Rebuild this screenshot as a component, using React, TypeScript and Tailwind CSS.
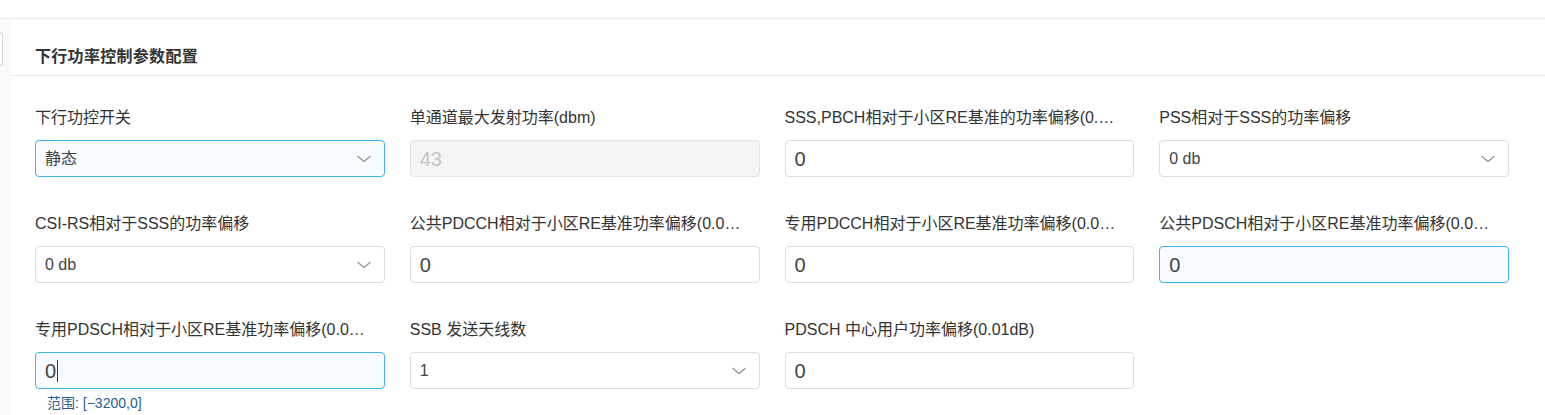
import React from 'react';

type Field = {
  label: string;
  kind: 'select' | 'input' | 'disabled';
  value: string;
  focused?: boolean;
  caret?: boolean;
  hint?: string;
};

const fields: Field[] = [
  { label: '下行功控开关', kind: 'select', value: '静态', focused: true },
  { label: '单通道最大发射功率(dbm)', kind: 'disabled', value: '43' },
  { label: 'SSS,PBCH相对于小区RE基准的功率偏移(0.01dB)', kind: 'input', value: '0' },
  { label: 'PSS相对于SSS的功率偏移', kind: 'select', value: '0 db' },
  { label: 'CSI-RS相对于SSS的功率偏移', kind: 'select', value: '0 db' },
  { label: '公共PDCCH相对于小区RE基准功率偏移(0.01dB)', kind: 'input', value: '0' },
  { label: '专用PDCCH相对于小区RE基准功率偏移(0.01dB)', kind: 'input', value: '0' },
  { label: '公共PDSCH相对于小区RE基准功率偏移(0.01dB)', kind: 'input', value: '0', focused: true },
  { label: '专用PDSCH相对于小区RE基准功率偏移(0.01dB)', kind: 'input', value: '0', focused: true, caret: true, hint: '范围: [−3200,0]' },
  { label: 'SSB 发送天线数', kind: 'select', value: '1' },
  { label: 'PDSCH 中心用户功率偏移(0.01dB)', kind: 'input', value: '0' },
];

const Chevron = () => (
  <svg width="16" height="16" viewBox="0 0 16 16" fill="none" className="text-[#9a9a9a]">
    <polyline points="2,5.5 8,10.5 14,5.5" stroke="currentColor" strokeWidth="1.5" strokeLinecap="round" strokeLinejoin="round" />
  </svg>
);

const Control: React.FC<{ f: Field }> = ({ f }) => {
  const base = 'h-[37px] w-full rounded-[4px] border flex items-center pl-[9px] pr-[12px]';
  if (f.kind === 'disabled') {
    return (
      <div className={`${base} border-[#e2e2e2] bg-[#f5f5f5] text-[20px] text-[#c4c4c4]`}>{f.value}</div>
    );
  }
  const tone = f.focused ? 'border-[#3db3e9] bg-[#f7fbff]' : 'border-[#dcdcdc] bg-white';
  if (f.kind === 'select') {
    return (
      <div className={`${base} ${tone} justify-between text-[16px] text-[#444]`}>
        <span>{f.value}</span>
        <Chevron />
      </div>
    );
  }
  return (
    <div className={`${base} ${tone} text-[20px] text-[#444]`}>
      <span>{f.value}</span>
      {f.caret && <span className="ml-[1px] inline-block h-[22px] w-px bg-[#333]" />}
    </div>
  );
};

export default function App() {
  return (
    <div
      className="w-[1545px] h-[415px] overflow-hidden bg-white flex flex-col"
      style={{ fontFamily: '"Liberation Sans", "Noto Sans CJK SC", sans-serif' }}
    >
      <div className="h-[19px] shrink-0 border-b border-[#e9e9f0]" />
      <div className="flex flex-1">
        {/* left strip */}
        <div className="w-[11px] shrink-0 bg-[#f9f9fb]">
          <div className="mt-[13px] h-[34px] w-[3px] rounded-r-[3px] border border-l-0 border-[#d8d8d8] bg-white" />
        </div>
        {/* card */}
        <div className="flex-1 flex flex-col">
          <div className="pl-[24px] pt-[28px] pb-[8px] border-b border-[#e9e9f0]">
            <h2 className="text-[16px] leading-[20px] font-bold text-[#333] tracking-[0.3px]">下行功率控制参数配置</h2>
          </div>
          <div className="pl-[24px] pr-[36px] pt-[32px] grid grid-cols-4 gap-x-[25px] gap-y-[37px] items-start">
            {fields.map((f, i) => (
              <div key={i} className="flex flex-col min-w-0">
                <div className="truncate text-[16px] leading-[20px] text-[#333] pr-[18px]">{f.label}</div>
                <div className="mt-[12px]">
                  <Control f={f} />
                </div>
                {f.hint && (
                  <div className="mt-[6px] pl-[12px] text-[14px] leading-[16px] text-[#2b5c8e]">{f.hint}</div>
                )}
              </div>
            ))}
          </div>
        </div>
      </div>
    </div>
  );
}
